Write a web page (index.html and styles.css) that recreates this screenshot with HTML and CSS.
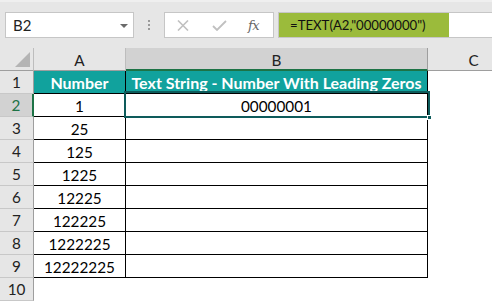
FILE: index.html
```html
<!DOCTYPE html>
<html>
<head>
<meta charset="utf-8">
<link rel="stylesheet" href="styles.css">
</head>
<body>
<div class="app">
  <div class="formula-bar">
    <div class="name-box"><span>B2</span><span class="dd"></span></div>
    <div class="dots"><i></i><i></i><i></i></div>
    <div class="fx-box">
      <svg class="ic-x" width="12" height="11" viewBox="0 0 12 11"><path d="M1 0.5 L11 10.5 M11 0.5 L1 10.5" stroke="#c0c0c0" stroke-width="1.6" fill="none"/></svg>
      <svg class="ic-ok" width="15" height="11" viewBox="0 0 15 11"><path d="M1 6 L5 10 L14 1" stroke="#c0c0c0" stroke-width="1.8" fill="none"/></svg>
      <span class="fx">fx</span>
    </div>
    <div class="formula"><span class="hl">=TEXT(A2,"00000000")</span></div>
  </div>
  <div class="sheet">
    <div class="corner"><span class="tri"></span></div>
    <div class="ch">A</div>
    <div class="ch sel">B</div>
    <div class="ch">C</div>

    <div class="rh">1</div>
    <div class="c th">Number</div>
    <div class="c th b">Text String - Number With Leading Zeros</div>
    <div class="e"></div>

    <div class="rh sel">2</div>
    <div class="c">1</div>
    <div class="c b">00000001</div>
    <div class="e"></div>

    <div class="rh">3</div><div class="c">25</div><div class="c b"></div><div class="e"></div>
    <div class="rh">4</div><div class="c">125</div><div class="c b"></div><div class="e"></div>
    <div class="rh">5</div><div class="c">1225</div><div class="c b"></div><div class="e"></div>
    <div class="rh">6</div><div class="c">12225</div><div class="c b"></div><div class="e"></div>
    <div class="rh">7</div><div class="c">122225</div><div class="c b"></div><div class="e"></div>
    <div class="rh">8</div><div class="c">1222225</div><div class="c b"></div><div class="e"></div>
    <div class="rh">9</div><div class="c">12222225</div><div class="c b"></div><div class="e"></div>
    <div class="rh">10</div><div class="e"></div><div class="e"></div><div class="e"></div>

    <div class="selection"><span class="handle"></span></div>
  </div>
</div>
</body>
</html>
```

FILE: styles.css
```css
* { box-sizing: border-box; }
html, body { margin: 0; padding: 0; }
body {
  width: 492px;
  height: 301px;
  overflow: hidden;
  background: #ffffff;
  font-family: Lato, "Open Sans", sans-serif;
  color: #000;
}
.app { width: 492px; height: 301px; overflow: hidden; }

.formula-bar {
  height: 48px;
  background: #e6e6e6;
  border-top: 2px solid #efefef;
  display: flex;
  align-items: flex-start;
  padding-top: 10px;
}
.name-box {
  margin-left: 5px;
  width: 129px;
  height: 26px;
  background: #fff;
  border: 1px solid #c6c6c6;
  display: flex;
  align-items: center;
  justify-content: space-between;
  padding: 0 5px 0 7px;
  font-size: 15px;
  color: #222;
}
.dd {
  width: 0; height: 0;
  border-left: 4px solid transparent;
  border-right: 4px solid transparent;
  border-top: 4px solid #6a6a6a;
  margin-top: 1px;
}
.dots {
  width: 30px;
  height: 26px;
  display: flex;
  flex-direction: column;
  align-items: center;
  justify-content: center;
  gap: 2px;
}
.dots i { display: block; width: 2px; height: 2px; background: #9a9a9a; }
.fx-box {
  width: 110px;
  height: 26px;
  background: #fff;
  border: 1px solid #c6c6c6;
  display: flex;
  align-items: center;
  padding-left: 12px;
}
.ic-x { margin-right: 23px; }
.ic-ok { margin-right: 21px; }
.fx {
  font-family: "DejaVu Serif", "Liberation Serif", serif;
  font-style: italic;
  font-size: 13px;
  color: #666;
  letter-spacing: -0.5px;
}
.formula {
  margin-left: 4px;
  flex: 1;
  height: 26px;
  background: #fff;
  border: 1px solid #c6c6c6;
  border-right: none;
  display: flex;
}
.hl {
  width: 170px;
  height: 24px;
  background: #9bbb3b;
  font-size: 13.2px;
  line-height: 24px;
  padding-left: 11px;
  color: #111;
  white-space: nowrap;
}

.sheet {
  position: relative;
  display: grid;
  grid-template-columns: 34px 92px 302px 92px;
  grid-template-rows: 23px 23px repeat(9, 23px);
  font-size: 15.3px;
}
.corner {
  background: #e6e6e6;
  border-right: 1px solid #bdbdbd;
  border-bottom: 1px solid #9e9e9e;
  position: relative;
}
.tri {
  position: absolute;
  right: 3px;
  bottom: 3px;
  width: 0; height: 0;
  border-left: 15px solid transparent;
  border-bottom: 15px solid #b4b4b4;
}
.ch {
  background: #e6e6e6;
  border-right: 1px solid #bdbdbd;
  border-bottom: 1px solid #9e9e9e;
  display: flex;
  align-items: center;
  justify-content: center;
  color: #222;
  padding-top: 2px;
}
.ch.sel {
  background: #d2d2d2;
  border-bottom: 2px solid #1d7346;
  border-right-color: #9e9e9e;
}
.rh {
  background: #e6e6e6;
  border-right: 1px solid #9e9e9e;
  border-bottom: 1px solid #c8c8c8;
  display: flex;
  align-items: center;
  justify-content: center;
  color: #222;
}
.rh.sel {
  background: #d2d2d2;
  border-right: 2px solid #1d7346;
  color: #1d7346;
}
.c {
  border-right: 1px solid #000;
  border-bottom: 1px solid #000;
  display: flex;
  align-items: center;
  justify-content: center;
  white-space: nowrap;
  padding-top: 1px;
}
.c.th {
  background: #11a29d;
  color: #fff;
  font-weight: 700;
  font-size: 16px;
}
.e { background: #fff; }

.selection {
  position: absolute;
  left: 124px;
  top: 43px;
  width: 306px;
  height: 27px;
  border: 2px solid #0e5b5b;
}
.handle {
  position: absolute;
  right: -4px;
  bottom: -4px;
  width: 5px;
  height: 5px;
  background: #0e5b5b;
  border: 1px solid #fff;
}
```
